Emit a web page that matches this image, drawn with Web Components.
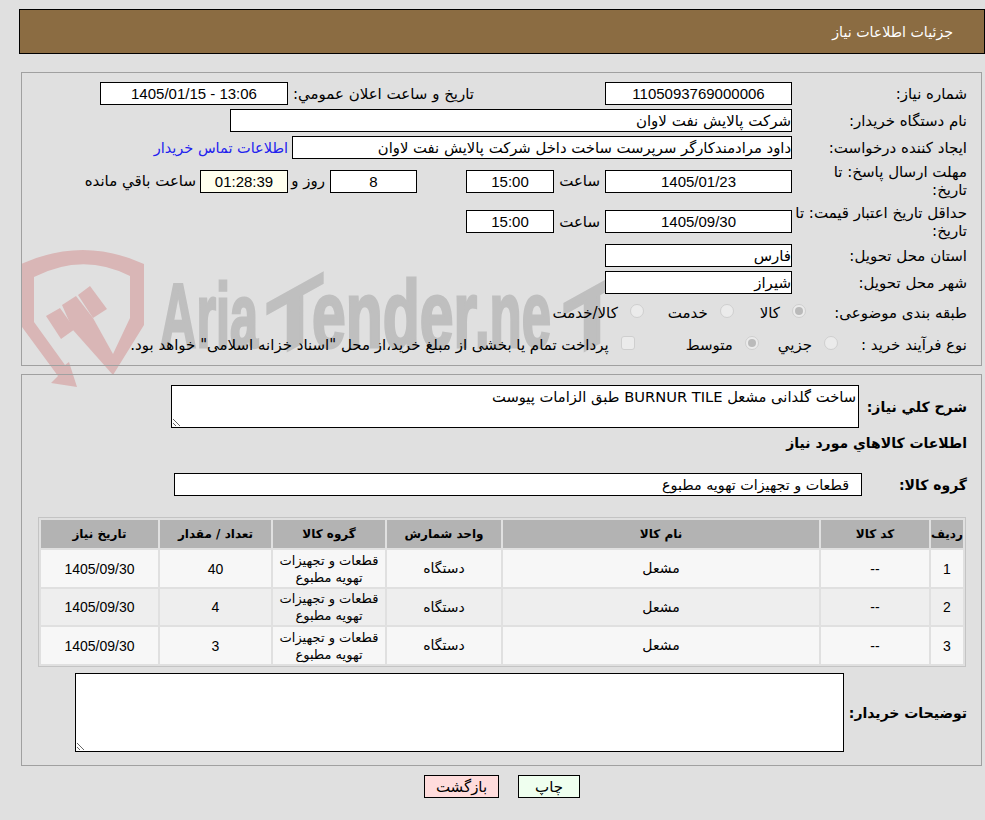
<!DOCTYPE html>
<html lang="fa" dir="rtl">
<head>
<meta charset="utf-8">
<title>جزئیات اطلاعات نیاز</title>
<style>
    html, body { margin: 0; padding: 0; }
    body {
        background: #e0e0e0;
        color: #000;
        font-family: "DejaVu Sans", sans-serif;
        font-size: 15px;
        position: relative;
        height: 820px;
        overflow: hidden;
    }
    .t { margin-inline-start: 4px; white-space: nowrap; }
</style>
</head>
<body>

<watermark-logo></watermark-logo>

<title-bar>جزئیات اطلاعات نیاز</title-bar>

<form-panel style="margin-top:18px;height:294px;padding-top:9px">
    <form-row label="شماره نیاز:">
        <value-box num center w="187">1105093769000006</value-box>
        <span class="t" style="width:182px;margin-right:131px;margin-left:4px">تاریخ و ساعت اعلان عمومي:</span>
        <value-box num center w="188" style="direction:ltr">1405/01/15 - 13:06</value-box>
    </form-row>
    <form-row label="نام دستگاه خریدار:">
        <value-box w="562">شرکت پالایش نفت لاوان</value-box>
    </form-row>
    <form-row label="ایجاد کننده درخواست:">
        <value-box w="500" style="font-size:14.8px">داود مرادمندکارگر سرپرست ساخت داخل شرکت پالایش نفت لاوان</value-box>
        <a class="t" style="color:#2222ee;font-size:14.5px">اطلاعات تماس خریدار</a>
    </form-row>
    <form-row h="36" label="مهلت ارسال پاسخ: تا&#10;تاریخ:">
        <value-box num center w="187">1405/01/23</value-box>
        <span class="t" style="width:46px;margin-right:5px">ساعت</span>
        <value-box num center w="88">15:00</value-box>
        <value-box num center w="87" style="margin-right:49px">8</value-box>
        <span class="t" style="width:37px;margin-right:5px">روز و</span>
        <value-box num center w="88" style="background:#ffffee">01:28:39</value-box>
        <span class="t">ساعت باقي مانده</span>
    </form-row>
    <form-row h="37" label="حداقل تاریخ اعتبار قیمت: تا&#10;تاریخ:">
        <value-box num center w="187">1405/09/30</value-box>
        <span class="t" style="width:46px;margin-right:5px">ساعت</span>
        <value-box num center w="88">15:00</value-box>
    </form-row>
    <form-row label="استان محل تحویل:">
        <value-box w="187">فارس</value-box>
    </form-row>
    <form-row label="شهر محل تحویل:">
        <value-box w="187">شیراز</value-box>
    </form-row>
    <form-row h="30" label="طبقه بندی موضوعی:">
        <choice-mark checked style="margin-right:-14px">کالا</choice-mark>
        <choice-mark style="margin-right:26px">خدمت</choice-mark>
        <choice-mark style="margin-right:24px">کالا/خدمت</choice-mark>
    </form-row>
    <form-row h="26" label="نوع فرآیند خرید :">
        <choice-mark style="margin-right:-46px">جزيي</choice-mark>
        <choice-mark checked style="margin-right:19px">متوسط</choice-mark>
        <choice-mark square style="margin-right:51px">پرداخت تمام یا بخشی از مبلغ خرید،از محل "اسناد خزانه اسلامی" خواهد بود.</choice-mark>
    </form-row>
</form-panel>

<form-panel style="margin-top:8px;height:392px;padding-top:10px">
    <form-row h="43" bold label="شرح کلي نیاز:" lw="108">
        <note-area w="688" h="43" style="font-size:14.7px">ساخت گلدانی مشعل BURNUR TILE طبق الزامات پیوست</note-area>
    </form-row>
    <form-row h="22" bold label="اطلاعات کالاهاي مورد نیاز" lw="300" style="margin-top:4px"></form-row>
    <form-row h="23" bold label="گروه کالا:" lw="105" style="margin-top:19px">
        <value-box w="688" style="padding-right:12px;box-sizing:border-box;font-size:14.3px">قطعات و تجهیزات تهویه مطبوع</value-box>
    </form-row>
    <items-table style="margin-top:21px"></items-table>
    <form-row h="79" bold label="توضیحات خریدار:" lw="123" style="margin-top:6px">
        <note-area w="769" h="79"></note-area>
    </form-row>
</form-panel>

<action-bar>
    <action-btn color="#efffef" w="62">چاپ</action-btn>
    <action-btn color="#ffdcdc" w="75">بازگشت</action-btn>
</action-bar>

<script>
    function shadow(el, html) {
        el.attachShadow({ mode: 'open' }).innerHTML = html;
    }

    customElements.define('title-bar', class extends HTMLElement {
        constructor() {
            super();
            shadow(this, `<style>
                :host {
                    display: flex;
                    align-items: center;
                    box-sizing: border-box;
                    height: 45px;
                    margin: 9px 0 0 19px;
                    padding: 0 31px 0 0;
                    border: 1px solid #000;
                    background: #8b6c42;
                    color: #fff;
                    font-size: 14.2px;
                    position: relative;
                }
            </style><slot></slot>`);
        }
    });

    customElements.define('form-panel', class extends HTMLElement {
        constructor() {
            super();
            shadow(this, `<style>
                :host {
                    display: block;
                    box-sizing: border-box;
                    margin-left: 21px;
                    margin-right: 3px;
                    border: 1px solid #a0a0a0;
                    padding-right: 14px;
                    position: relative;
                }
            </style><slot></slot>`);
        }
    });

    customElements.define('form-row', class extends HTMLElement {
        constructor() {
            super();
            const lw = this.getAttribute('lw') || 175;
            const h = this.getAttribute('h') || 23;
            const bold = this.hasAttribute('bold');
            shadow(this, `<style>
                :host {
                    display: flex;
                    align-items: center;
                    min-height: ${h}px;
                    margin-bottom: 4px;
                }
                .label {
                    flex: none;
                    width: ${lw}px;
                    white-space: pre-line;
                    line-height: 18px;
                    ${bold ? 'font-weight: bold; font-size: 14px;' : ''}
                }
            </style><div class="label"></div><slot></slot>`);
            this.shadowRoot.querySelector('.label').textContent = this.getAttribute('label');
        }
    });

    customElements.define('value-box', class extends HTMLElement {
        constructor() {
            super();
            const w = this.getAttribute('w');
            const num = this.hasAttribute('num');
            const center = this.hasAttribute('center');
            shadow(this, `<style>
                :host {
                    display: flex;
                    flex: none;
                    align-items: center;
                    justify-content: ${center ? 'center' : 'flex-start'};
                    box-sizing: border-box;
                    width: ${w}px;
                    height: 23px;
                    border: 1px solid #000;
                    background: #fff;
                    white-space: nowrap;
                    ${num ? 'font: 15px "Liberation Sans", sans-serif;' : ''}
                }
            </style><slot></slot>`);
        }
    });

    customElements.define('choice-mark', class extends HTMLElement {
        constructor() {
            super();
            const square = this.hasAttribute('square');
            const checked = this.hasAttribute('checked');
            shadow(this, `<style>
                :host {
                    display: inline-flex;
                    flex: none;
                    align-items: center;
                    gap: 12px;
                    white-space: nowrap;
                }
                .mark {
                    flex: none;
                    box-sizing: border-box;
                    width: 14px;
                    height: 14px;
                    margin-top: -4px;
                    border: 1px solid #cfcfcf;
                    border-radius: ${square ? '3px' : '50%'};
                    background: #ebebeb;
                    display: flex;
                    align-items: center;
                    justify-content: center;
                }
                .dot {
                    width: 8px;
                    height: 8px;
                    border-radius: 50%;
                    background: #bababa;
                }
            </style><span class="mark">${checked ? '<span class="dot"></span>' : ''}</span><span><slot></slot></span>`);
        }
    });

    customElements.define('note-area', class extends HTMLElement {
        constructor() {
            super();
            shadow(this, `<style>
                :host { display: block; flex: none; }
                .area {
                    box-sizing: border-box;
                    width: ${this.getAttribute('w')}px;
                    height: ${this.getAttribute('h')}px;
                    border: 1px solid #000;
                    background: #fff;
                    padding: 2px;
                    overflow: auto;
                    resize: both;
                }
            </style><div class="area"><slot></slot></div>`);
        }
    });

    customElements.define('items-table', class extends HTMLElement {
        constructor() {
            super();
            const heads = ['ردیف', 'کد کالا', 'نام کالا', 'واحد شمارش', 'گروه کالا', 'تعداد / مقدار', 'تاریخ نیاز'];
            const widths = [32, 108, 316, 114, 112, 111, 117];
            const group = 'قطعات و تجهیزات<br>تهویه مطبوع';
            const rows = [
                ['1', '--', 'مشعل', 'دستگاه', group, '40', '1405/09/30'],
                ['2', '--', 'مشعل', 'دستگاه', group, '4', '1405/09/30'],
                ['3', '--', 'مشعل', 'دستگاه', group, '3', '1405/09/30'],
            ];
            const isNum = i => i === 0 || i === 1 || i === 5 || i === 6;
            const cls = i => (isNum(i) ? 'n' : i === 4 ? 'g' : '');
            shadow(this, `<style>
                :host {
                    display: block;
                    width: 928px;
                    margin-right: 1px;
                }
                table {
                    width: 100%;
                    table-layout: fixed;
                    border-collapse: separate;
                    border-spacing: 2px;
                    border: 1px solid #c4c4c4;
                }
                th, td { padding: 0; text-align: center; }
                th { height: 28px; background: #b3b3b3; font-weight: bold; font-size: 12px; }
                td { height: 37px; line-height: 17px; font-size: 14px; }
                tr:nth-child(2) td { height: 36px; }
                td.n { font: 14px "Liberation Sans", sans-serif; }
                td.g { font-size: 13px; }
                tr:nth-child(odd) td { background: #f7f7f7; }
                tr:nth-child(even) td { background: #eeeeee; }
            </style>
            <table>
                <colgroup>${widths.map(w => `<col style="width:${w}px">`).join('')}</colgroup>
                <thead><tr>${heads.map(h => `<th>${h}</th>`).join('')}</tr></thead>
                <tbody>${rows.map(r => `<tr>${r.map((c, i) => `<td class="${cls(i)}">${c}</td>`).join('')}</tr>`).join('')}</tbody>
            </table>`);
        }
    });

    customElements.define('action-bar', class extends HTMLElement {
        constructor() {
            super();
            shadow(this, `<style>
                :host {
                    display: flex;
                    justify-content: center;
                    gap: 19px;
                    margin-top: 9px;
                    padding-left: 19px;
                }
            </style><slot></slot>`);
        }
    });

    customElements.define('action-btn', class extends HTMLElement {
        constructor() {
            super();
            shadow(this, `<style>
                :host {
                    display: flex;
                    align-items: center;
                    justify-content: center;
                    box-sizing: border-box;
                    width: ${this.getAttribute('w')}px;
                    height: 23px;
                    border: 1px solid #000;
                    background: ${this.getAttribute('color')};
                }
            </style><slot></slot>`);
        }
    });

    // faint logo behind the panels
    customElements.define('watermark-logo', class extends HTMLElement {
        constructor() {
            super();
            shadow(this, `<style>
                :host { position: absolute; left: 0; top: 0; width: 985px; height: 820px; z-index: -1; }
                svg { display: block; }
                text { font-family: "Liberation Sans", sans-serif; font-weight: bold; font-size: 90px; fill: #bfbfbf; stroke: #bfbfbf; stroke-width: 3px; direction: ltr; }
                .big { font-size: 94px; }
                .tee { font-size: 84px; }
            </style>
            <svg width="985" height="820" viewBox="0 0 985 820" direction="ltr">
                <g fill="#d9b6b6">
                    <path d="M51 383 L58 376 L22 327 L21 264 Q83 236 144 264 L144 325 L113 375 L113 354 L130 318 L130 276 Q83 252 34 277 L34 322 L65 365 L69 362 L77 387 Z"/>
                    <path d="M46 316 L60 308 L75 329 L61 339 Z"/>
                    <path d="M62 305 L76 296 L93 318 L113 354 L113 375 L73 330 Z"/>
                    <path d="M78 295 L90 286 L107 309 L93 318 Z"/>
                </g>
                <text x="160" y="347" textLength="98" lengthAdjust="spacingAndGlyphs">Aria</text>
                <text class="tee" x="0" y="0" textLength="56" lengthAdjust="spacingAndGlyphs" transform="translate(267 362) skewY(-29)">T</text>
                <text class="big" x="312" y="347" textLength="165" lengthAdjust="spacingAndGlyphs">ender</text>
                <text class="big" x="475" y="347" textLength="76" lengthAdjust="spacingAndGlyphs">.ne</text>
                <text class="tee" x="0" y="0" textLength="56" lengthAdjust="spacingAndGlyphs" transform="translate(564 362) skewY(-29)">T</text>
            </svg>`);
        }
    });
</script>
</body>
</html>
